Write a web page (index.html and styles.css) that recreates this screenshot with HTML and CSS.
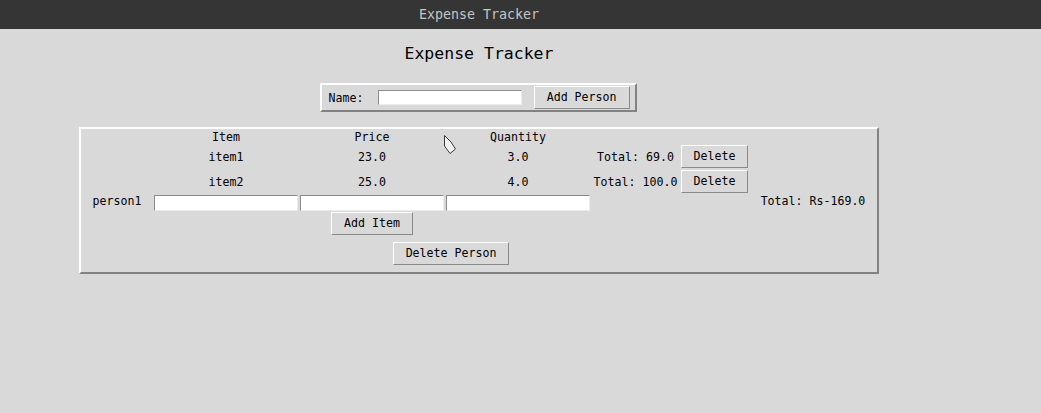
FILE: index.html
```html
<!DOCTYPE html>
<html>
<head>
<meta charset="utf-8">
<title>Expense Tracker</title>
<link rel="stylesheet" href="styles.css">
</head>
<body>
<div class="titlebar"><div class="titlebar-inner">Expense Tracker</div></div>
<div class="app">
  <h1 class="heading">Expense Tracker</h1>
  <div class="name-frame">
    <span class="name-label">Name:</span>
    <input class="entry name-entry" type="text">
    <button class="btn add-person">Add Person</button>
  </div>
  <div class="person-frame">
    <div class="pgrid">
      <div class="cell c1 r0">Item</div>
      <div class="cell c2 r0">Price</div>
      <div class="cell c3 r0">Quantity</div>

      <div class="cell c1 r1">item1</div>
      <div class="cell c2 r1">23.0</div>
      <div class="cell c3 r1">3.0</div>
      <div class="cell c4 r1">Total: 69.0</div>
      <div class="cell c5 r1 btncell"><button class="btn">Delete</button></div>

      <div class="cell c1 r2">item2</div>
      <div class="cell c2 r2">25.0</div>
      <div class="cell c3 r2">4.0</div>
      <div class="cell c4 r2">Total: 100.0</div>
      <div class="cell c5 r2"><button class="btn">Delete</button></div>

      <div class="cell c0 r3 lift">person1</div>
      <div class="cell c1 r3"><input class="entry" type="text"></div>
      <div class="cell c2 r3"><input class="entry" type="text"></div>
      <div class="cell c3 r3"><input class="entry" type="text"></div>
      <div class="cell c6 r3 lift">Total: Rs-169.0</div>

      <div class="cell c2 r4"><button class="btn">Add Item</button></div>
      <div class="cell span15 r5"><button class="btn">Delete Person</button></div>
    </div>
  </div>
</div>
<svg class="pointer" width="16" height="22" viewBox="0 0 16 22">
  <polygon points="1.5,1.5 1.5,12 7,19.5 12.5,15 8,8" fill="#f2f2f2" stroke="#3a3a3a" stroke-width="1" stroke-linejoin="round"/>
</svg>
</body>
</html>
```
FILE: styles.css
```css
html, body {
  margin: 0;
  padding: 0;
  background: #d9d9d9;
  width: 1041px;
  height: 413px;
  overflow: hidden;
  font-family: "DejaVu Sans Mono", "Liberation Mono", monospace;
  font-size: 11.6px;
  color: #000;
}

.titlebar {
  height: 29px;
  background: #353535;
}

.titlebar-inner {
  width: 958px;
  text-align: center;
  color: #c4c4c4;
  font-size: 13.3px;
  line-height: 29px;
}

.app {
  width: 958px;
  display: flex;
  flex-direction: column;
  align-items: center;
}

.heading {
  margin: 15px 0 0 0;
  font-weight: normal;
  font-size: 16.5px;
  line-height: 20px;
}

.name-frame {
  margin-top: 19px;
  margin-right: 2px;
  display: flex;
  align-items: center;
  box-sizing: border-box;
  width: 317px;
  height: 29px;
  border: 2px solid;
  border-color: #ffffff #828282 #828282 #ffffff;
  padding-right: 5px;
}

.name-label {
  margin-left: 7px;
  width: 35px;
}

.entry {
  box-sizing: border-box;
  width: 144px;
  height: 16px;
  margin: 0;
  padding: 0;
  background: #ffffff;
  border: 1px solid;
  border-color: #8c8c8c #ececec #ececec #8c8c8c;
  outline: none;
  font: inherit;
}

.name-entry {
  margin-left: 14px;
  height: 15px;
}

.btn {
  box-sizing: border-box;
  height: 23px;
  margin: 0;
  padding: 0 12px;
  background: #d9d9d9;
  border: 1px solid;
  border-color: #ffffff #8a8a8a #8a8a8a #ffffff;
  font: inherit;
  color: #000;
  line-height: 21px;
}

.add-person {
  margin-left: auto;
}

.person-frame {
  margin-top: 15px;
  border: 2px solid;
  border-color: #ffffff #828282 #828282 #ffffff;
}

.pgrid {
  display: grid;
  grid-template-columns: 72px 146px 146px 146px 89px 69px 128px;
  grid-template-rows: 16px 24px 25px 17px 24px 37px;
}

.cell {
  display: flex;
  align-items: center;
  justify-content: center;
  white-space: nowrap;
}

.c0 { grid-column: 1; }
.c1 { grid-column: 2; }
.c2 { grid-column: 3; }
.c3 { grid-column: 4; }
.c4 { grid-column: 5; }
.c5 { grid-column: 6; }
.c6 { grid-column: 7; }
.span15 { grid-column: 2 / 7; }

.r0 { grid-row: 1; }
.r1 { grid-row: 2; }
.r2 { grid-row: 3; }
.r3 { grid-row: 4; }
.r4 { grid-row: 5; }
.r5 { grid-row: 6; align-items: flex-start; padding-top: 7px; }

.btncell { align-items: flex-start; }

.lift { padding-bottom: 3px; }

.pointer {
  position: absolute;
  left: 443px;
  top: 134px;
}
```
